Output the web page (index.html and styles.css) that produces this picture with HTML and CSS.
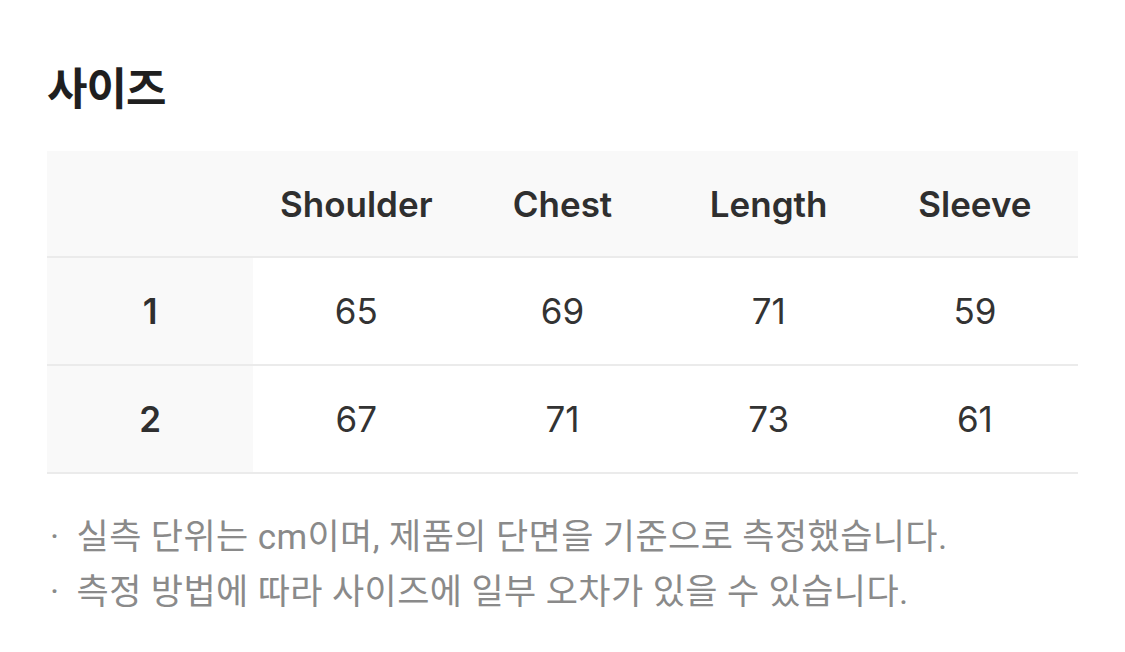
FILE: index.html
```html
<!DOCTYPE html>
<html lang="ko">
<head>
<meta charset="utf-8">
<link rel="stylesheet" href="styles.css">
</head>
<body>
<section class="size">
  <h2 class="title">사이즈</h2>
  <table class="table">
    <thead>
      <tr>
        <th class="corner"></th>
        <th>Shoulder</th>
        <th>Chest</th>
        <th>Length</th>
        <th>Sleeve</th>
      </tr>
    </thead>
    <tbody>
      <tr>
        <th class="rowhead">1</th>
        <td>65</td><td>69</td><td>71</td><td>59</td>
      </tr>
      <tr>
        <th class="rowhead">2</th>
        <td>67</td><td>71</td><td>73</td><td>61</td>
      </tr>
    </tbody>
  </table>
  <ul class="notes">
    <li>실측 단위는 cm이며, 제품의 단면을 기준으로 측정했습니다.</li>
    <li>측정 방법에 따라 사이즈에 일부 오차가 있을 수 있습니다.</li>
  </ul>
</section>
</body>
</html>
```
FILE: styles.css
```css
html, body {
  margin: 0;
  padding: 0;
  background: #ffffff;
}
body {
  font-family: Inter, "Noto Sans CJK KR", sans-serif;
  color: #2b2b2b;
}
.size {
  padding: 58px 47px 0 47px;
}
.title {
  margin: 0;
  font-family: "Noto Sans CJK KR", sans-serif;
  font-size: 44px;
  font-weight: 700;
  line-height: 56px;
  color: #1f1f1f;
  letter-spacing: -1px;
}
.table {
  margin-top: 37px;
  width: 1031px;
  border-collapse: collapse;
  table-layout: fixed;
}
.table th, .table td {
  text-align: center;
  padding: 0;
  border-bottom: 2px solid #ebebeb;
}
.table thead th {
  height: 105px;
  background: #f9f9f9;
  font-size: 35px;
  font-weight: 600;
  color: #2f2f2f;
}
.table tbody td, .table tbody th {
  height: 106px;
  font-size: 35px;
}
.table tbody td {
  font-weight: 400;
  color: #333;
}
.rowhead {
  background: #f9f9f9;
  font-weight: 600;
  color: #2f2f2f;
}
.notes {
  list-style: none;
  margin: 36px 0 0 0;
  padding: 0;
  font-family: Roboto, "Noto Sans CJK KR", sans-serif;
  font-size: 35px;
  line-height: 55px;
  color: #8a8a8a;
  letter-spacing: 0.4px;
}
.notes li {
  display: flex;
  gap: 17px;
}
.notes li::before {
  content: "·";
  padding-left: 3px;
}
```
